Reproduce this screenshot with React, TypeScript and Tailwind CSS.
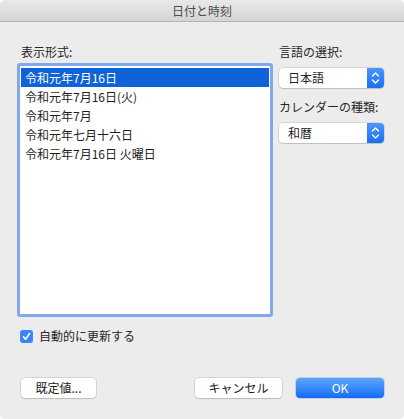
import React from "react";

const font = { fontFamily: '"Noto Sans CJK JP", "Noto Sans", sans-serif' };

function Stepper() {
  return (
    <div className="w-[17px] h-full rounded-r-[4px] bg-gradient-to-b from-[#4a97fb] to-[#1a6ef5] flex items-center justify-center">
      <svg width="9" height="14" viewBox="0 0 9 14" fill="none" stroke="white" strokeWidth="1.4" strokeLinecap="round" strokeLinejoin="round">
        <path d="M1.5 5 L4.5 2 L7.5 5" />
        <path d="M1.5 9 L4.5 12 L7.5 9" />
      </svg>
    </div>
  );
}

function Popup({ label }: { label: string }) {
  return (
    <div className="h-[20px] w-[105px] flex rounded-[4px] bg-white shadow-[0_0_0_0.5px_rgba(0,0,0,0.18),0_1px_1px_rgba(0,0,0,0.12)]">
      <div className="flex-1 pl-[9px] flex items-center text-[12px] text-[#222] leading-none">{label}</div>
      <Stepper />
    </div>
  );
}

function Button({ children, w }: { children: React.ReactNode; w: string }) {
  return (
    <div
      className={`${w} h-[20px] rounded-[4px] bg-white flex items-center justify-center text-[12px] text-[#222] leading-none shadow-[0_0_0_0.5px_rgba(0,0,0,0.2),0_1px_1px_rgba(0,0,0,0.12)]`}
    >
      {children}
    </div>
  );
}

export default function App() {
  const rows = [
    "令和元年7月16日",
    "令和元年7月16日(火)",
    "令和元年7月",
    "令和元年七月十六日",
    "令和元年7月16日 火曜日",
  ];
  return (
    <div className="w-[404px] h-[419px] bg-white" style={font}>
      <div className="w-full h-full bg-[#ececec] rounded-[5px] overflow-hidden flex flex-col">
        <div className="h-[22px] shrink-0 bg-gradient-to-b from-[#e9e9e9] to-[#d4d4d4] border-b border-[#b4b4b4] flex items-center justify-center text-[12px] text-[#4c4c4c] leading-none">
          日付と時刻
        </div>
        <div className="flex flex-col pl-[17px] pr-[20px]">
          <div className="flex gap-[6px] mt-[22px]">
            <div className="w-[256px] flex flex-col">
              <div className="h-[16px] pl-[4px] text-[12px] text-[#262626] leading-[16px]">表示形式:</div>
              <div className="mt-[3px] h-[254px] rounded-[3px] border-[3px] border-[#80a8ec] bg-white pt-[2px] px-[1px]">
                {rows.map((r, i) => (
                  <div
                    key={r}
                    className={`h-[19px] pl-[4px] flex items-center text-[12px] leading-none ${
                      i === 0 ? "bg-[#0f63d9] text-white" : "text-[#1e1e1e]"
                    }`}
                  >
                    {r}
                  </div>
                ))}
              </div>
            </div>
            <div className="w-[105px] flex flex-col">
              <div className="h-[16px] text-[12px] text-[#262626] leading-[16px]">言語の選択:</div>
              <div className="mt-[8px]">
                <Popup label="日本語" />
              </div>
              <div className="mt-[11px] h-[16px] text-[12px] text-[#262626] leading-[16px] whitespace-nowrap">
                カレンダーの種類:
              </div>
              <div className="mt-[8px]">
                <Popup label="和暦" />
              </div>
            </div>
          </div>
          <div className="mt-[11px] pl-[3px] flex items-center gap-[6px] h-[16px]">
            <div className="w-[13px] h-[13px] rounded-[3px] bg-[#3a85f7] flex items-center justify-center">
              <svg width="9" height="9" viewBox="0 0 9 9" fill="none" stroke="white" strokeWidth="1.6" strokeLinecap="round" strokeLinejoin="round">
                <path d="M1.5 4.8 L3.6 7.2 L7.6 1.5" />
              </svg>
            </div>
            <span className="text-[12px] text-[#262626] leading-none">自動的に更新する</span>
          </div>
          <div className="mt-[34px] flex items-center pl-[4px]">
            <Button w="w-[75px]">既定値...</Button>
            <div className="ml-[99px]">
              <Button w="w-[87px]">キャンセル</Button>
            </div>
            <div className="ml-[14px] w-[88px] h-[20px] rounded-[4px] bg-gradient-to-b from-[#5ba6fb] to-[#126cf5] flex items-center justify-center text-[12px] text-white leading-none shadow-[0_0_0_0.5px_rgba(0,60,200,0.35)]">
              OK
            </div>
          </div>
        </div>
      </div>
    </div>
  );
}
